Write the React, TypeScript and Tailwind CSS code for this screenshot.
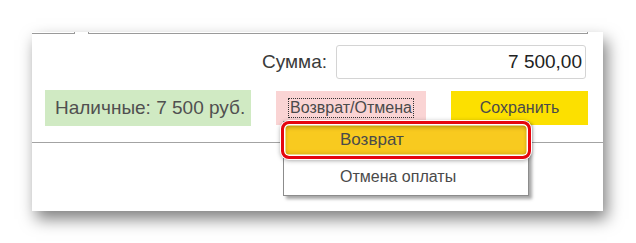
export default function App() {
  return (
    <div
      className="w-[636px] h-[243px] bg-white pl-[32px] pt-[32px] overflow-hidden"
      style={{ fontFamily: '"Liberation Sans", Arial, sans-serif' }}
    >
      <div className="relative w-[571px] h-[179px] bg-white shadow-[4px_8px_15px_rgba(0,0,0,0.5)]">
        {/* cut-off fields at top */}
        <div className="flex h-[2px]">
          <div className="w-[43px] border-b border-r border-[#9a9a9a]" />
          <div className="w-[13px]" />
          <div className="w-[500px] border-b border-l border-r border-[#9a9a9a]" />
        </div>
        {/* Sum row */}
        <div className="flex justify-end items-center pr-[17px] mt-[11px] gap-[9px]">
          <span className="text-[19px] text-[#3a3a3a]">Сумма:</span>
          <div className="w-[250px] h-[34px] border border-[#d4d4d4] rounded-[3px] flex items-center justify-end pr-[3px] text-[19px] text-[#222]">
            7 500,00
          </div>
        </div>
        {/* Buttons row */}
        <div className="flex items-center mt-[11px] pl-[13px]">
          <div className="w-[206px] h-[36px] bg-[#d0eac3] flex items-center pl-[10px] text-[19px] text-[#505050]">
            Наличные: 7 500 руб.
          </div>
          <div className="ml-[25px] w-[150px] h-[34px] bg-[#fad4d4] flex items-center justify-center">
            <span className="border border-dotted border-[#333] px-[1px] h-[20px] flex items-center text-[16px] text-[#4a4a4a]">
              Возврат/Отмена
            </span>
          </div>
          <div className="ml-[25px] w-[137px] h-[34px] bg-[#fce000] flex items-center justify-center text-[16px] text-[#4a4a4a]">
            Сохранить
          </div>
        </div>
        <div className="mt-[16px] border-t border-[#a3a3a3]" />

        {/* Dropdown */}
        <div className="absolute left-[251px] top-[89px] w-[246px] h-[75px] bg-white border border-[#8c8c8c] shadow-[3px_3px_3px_rgba(0,0,0,0.35)]">
          <div className="-mx-[3px] -mt-[1px] h-[38px] rounded-[8px] border-[3px] border-[#e5060f] bg-[#f8ca1f] shadow-[0_0_0_1px_#fff,0_1px_5px_rgba(0,0,0,0.45),inset_0_0_0_1.5px_#fff,inset_0_3px_4px_rgba(120,95,0,0.55),inset_0_-2px_4px_rgba(150,120,0,0.45)] flex items-center pl-[56px] text-[17px] text-[#4a4a4a]">
            Возврат
          </div>
          <div className="h-[36px] flex items-center pl-[56px] text-[16px] text-[#4a4a4a]">
            Отмена оплаты
          </div>
        </div>
      </div>
    </div>
  );
}
